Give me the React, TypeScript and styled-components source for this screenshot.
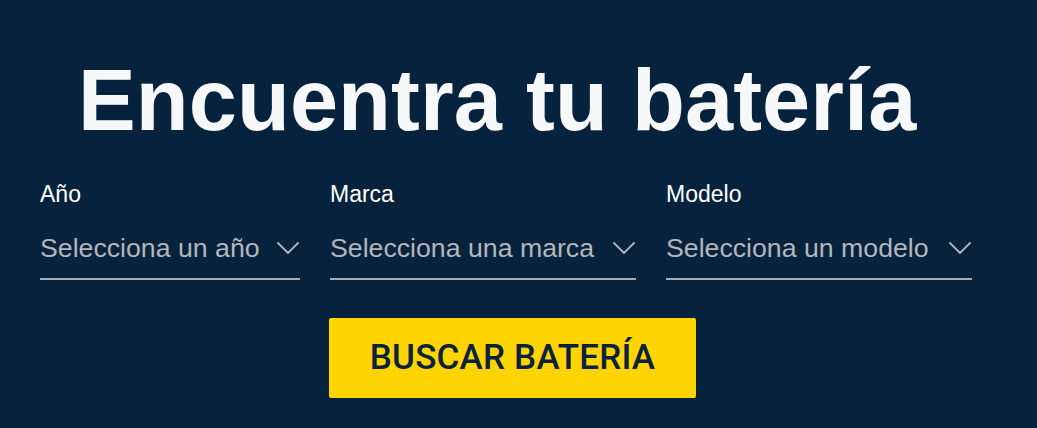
import React from "react";
import styled, { createGlobalStyle } from "styled-components";

const GlobalStyle = createGlobalStyle`
  html, body {
    margin: 0;
    padding: 0;
    background: #07223d;
  }
  * { box-sizing: border-box; }
`;

const Page = styled.div`
  width: 1037px;
  height: 428px;
  background: #07223d;
  padding: 57px 52px 0 40px;
  font-family: "Liberation Sans", Arial, sans-serif;
  overflow: hidden;
`;

const Title = styled.h1`
  margin: 0 0 38px 38px;
  font-size: 86.5px;
  line-height: 86px;
  font-weight: 700;
  color: #f7f8fa;
  letter-spacing: 0.1px;
  white-space: nowrap;
`;

const Fields = styled.div`
  display: grid;
  grid-template-columns: 260px 306px 306px;
  column-gap: 30px;
`;

const Field = styled.div`
  display: flex;
  flex-direction: column;
`;

const Label = styled.label`
  font-size: 23px;
  line-height: 26px;
  color: #ffffff;
  margin-bottom: 26px;
`;

const SelectBox = styled.div`
  display: flex;
  align-items: center;
  justify-content: space-between;
  padding-bottom: 15px;
  border-bottom: 2px solid #a7abb0;
  cursor: pointer;
`;

const Placeholder = styled.span`
  font-size: 26.7px;
  line-height: 30px;
  color: #b3b6ba;
  white-space: nowrap;
`;

const Chevron = styled.svg`
  width: 24px;
  height: 14px;
  flex-shrink: 0;
`;

const Actions = styled.div`
  display: flex;
  justify-content: center;
  margin-top: 38px;
`;

const SearchButton = styled.button`
  width: 367px;
  height: 80px;
  border: none;
  border-radius: 2px;
  background: #ffd400;
  color: #0b223f;
  font-family: Roboto, "Liberation Sans", sans-serif;
  font-weight: 500;
  font-size: 35px;
  letter-spacing: 0.2px;
  display: flex;
  align-items: center;
  justify-content: center;
  padding: 0 0 2px 0;
  cursor: pointer;
`;

const ChevronDown = () => (
  <Chevron viewBox="0 0 24 14" fill="none">
    <path d="M1.5 1.5 L12 12 L22.5 1.5" stroke="#b3b6ba" strokeWidth="1.8" />
  </Chevron>
);

const fields = [
  { label: "Año", placeholder: "Selecciona un año" },
  { label: "Marca", placeholder: "Selecciona una marca" },
  { label: "Modelo", placeholder: "Selecciona un modelo" },
];

export default function App() {
  return (
    <Page>
      <GlobalStyle />
      <Title>Encuentra tu batería</Title>
      <Fields>
        {fields.map((f) => (
          <Field key={f.label}>
            <Label>{f.label}</Label>
            <SelectBox>
              <Placeholder>{f.placeholder}</Placeholder>
              <ChevronDown />
            </SelectBox>
          </Field>
        ))}
      </Fields>
      <Actions>
        <SearchButton>BUSCAR BATERÍA</SearchButton>
      </Actions>
    </Page>
  );
}
